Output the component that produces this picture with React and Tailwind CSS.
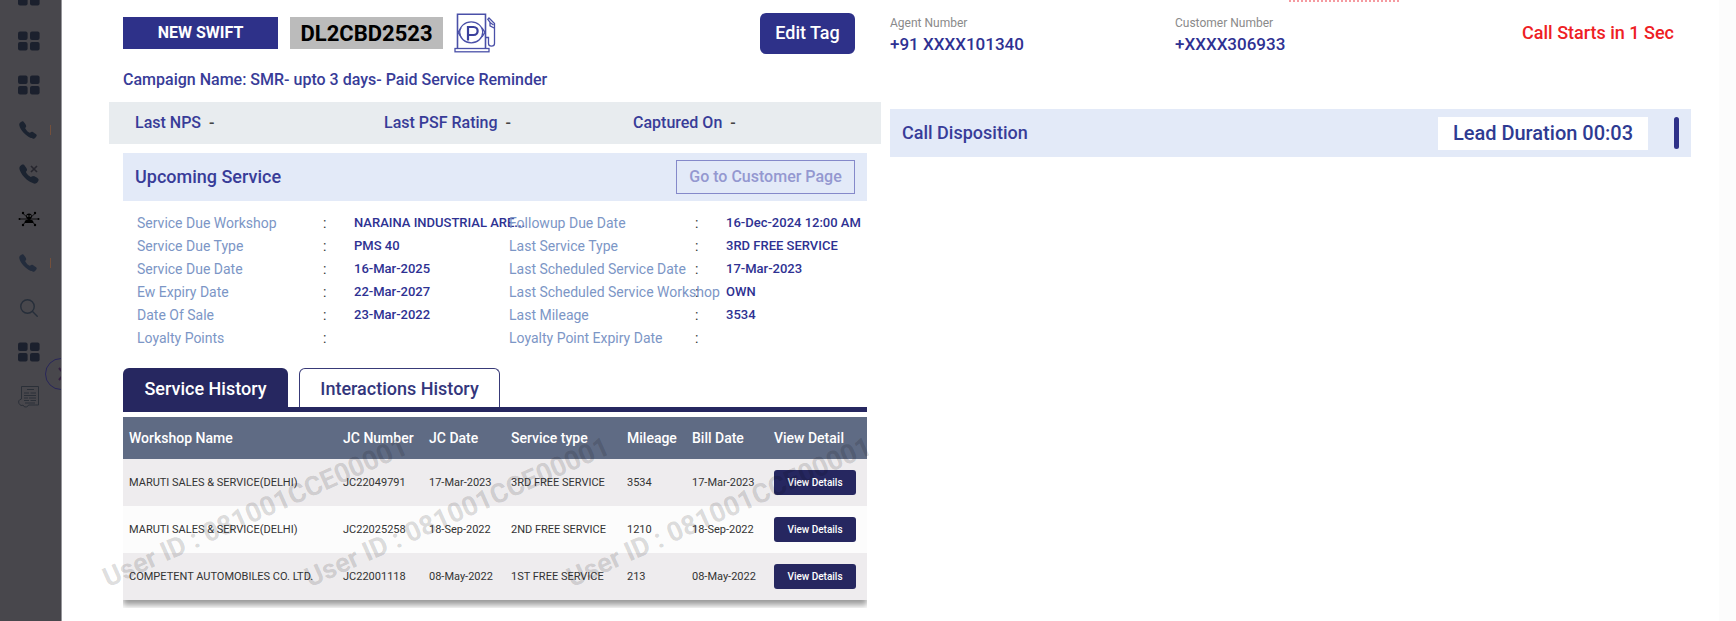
import { IoCall, IoSearchOutline } from "react-icons/io5";

function GridIcon() {
  return (
    <svg viewBox="0 0 22 20" className="h-5 w-[22px] fill-[#1b202d]">
      <rect x="0" y="0.5" width="9.6" height="8.6" rx="2" />
      <rect x="12" y="0.5" width="9.6" height="8.6" rx="2" />
      <rect x="0" y="11" width="9.6" height="8.6" rx="2" />
      <rect x="12" y="11" width="9.6" height="8.6" rx="2" />
    </svg>
  );
}

function CallIcon({ missed, light }) {
  return (
    <span className="relative flex h-[22px] w-[22px] items-center">
      <IoCall className={light ? "size-5 text-[#232c3c]" : missed ? "size-[22px] text-[#1b2330]" : "size-5 text-[#1b2330]"} />
      {missed && (
        <svg viewBox="0 0 8 8" className="absolute top-[2px] right-[2px] size-2 fill-none stroke-[#26262e] stroke-[1.6]">
          <path d="M1 1l6 6M7 1L1 7" />
        </svg>
      )}
    </span>
  );
}

function VirusIcon() {
  return (
    <svg viewBox="0 0 22 16" className="h-4 w-[22px] fill-black stroke-black">
      <path d="M4.500 2l13 12M17.500 2l-13 12M1 8h20" strokeWidth="0.8" />
      <circle cx="5" cy="2" r="1.2" stroke="none" />
      <circle cx="17" cy="2" r="1.2" stroke="none" />
      <circle cx="5" cy="14" r="1.2" stroke="none" />
      <circle cx="17" cy="14" r="1.2" stroke="none" />
      <circle cx="1.5" cy="8" r="1" stroke="none" />
      <circle cx="20.5" cy="8" r="1" stroke="none" />
      <circle cx="11" cy="5.4" r="2.800" stroke="none" />
      <path d="M6.5 12c0-2.800 1.5-3.500 4.500-3.500s4.500.7 4.500 3.500z" stroke="none" />
      <circle cx="9.800" cy="5" r="0.700" fill="#77777b" stroke="none" />
      <circle cx="12.200" cy="5" r="0.700" fill="#77777b" stroke="none" />
    </svg>
  );
}

function DocumentIcon() {
  return (
    <svg viewBox="0 0 22 24" className="h-6 w-[22px] fill-none stroke-[#2b3038]">
      <path d="M3.500 14V1.500h17v18.500h-3" strokeWidth="1" />
      <path d="M3.500 14c-2.500.5-3.500 2.500-2.500 4.500s3 2.500 4 1.500M5 20c.5 2 3 2.500 4.500 1.500l1-1.500h7" strokeWidth="1" />
      <path d="M9 4.500h7M6 8h5M12.500 8H18M6 10.500h12M6 13h4M11 13h7M6 15.500h5M12.500 15.500H18M7 18h10" strokeWidth="1.200" />
    </svg>
  );
}

function FuelPumpIcon() {
  return (
    <svg viewBox="0 0 42 40" className="h-10 w-[42px] fill-none stroke-[#4a50a8]" strokeWidth="1.300">
      <path d="M3.500 35V1.200h28V35" strokeWidth="1.600" />
      <rect x="1" y="35.500" width="34" height="3.300" />
      <ellipse cx="17.200" cy="19.300" rx="11.500" ry="10.500" />
      <path d="M4 19.300l3-4.500M4 19.300l3 4.500M31 19.300l-3-4.500M31 19.300l-3 4.500" />
      <path d="M14 27.500V14h5.500c5.500 0 5.500 8 0 8H14" strokeWidth="2.200" stroke="#3a409c" />
      <path d="M32 24.500h2.500v6c0 3.500 6 3.500 6 0V10.500L35 5l-1.200 1.300 2.200 3v3.500l4.500 2.500M36 9.500l3.500 2.500" />
    </svg>
  );
}

const menu = [
  { name: "Overview", icon: <GridIcon /> },
  { name: "Dashboard", icon: <GridIcon /> },
  { name: "Reports", icon: <GridIcon /> },
  { name: "Calls", icon: <CallIcon />, mark: true },
  { name: "Missed calls", icon: <CallIcon missed /> },
  { name: "Safety", icon: <VirusIcon /> },
  { name: "Call log", icon: <CallIcon light />, mark: true },
  { name: "Search", icon: <IoSearchOutline className="size-[22px] text-[#262e3a]" /> },
  { name: "Modules", icon: <GridIcon /> },
  { name: "Documents", icon: <DocumentIcon /> },
];

function Sidebar() {
  return (
    <aside className="relative w-[62px] shrink-0 overflow-hidden border-r border-[#96969a] bg-[#48474c]">
      <nav className="-mt-[15px] flex h-[423px] flex-col justify-between">
        {menu.map((item) => (
          <a key={item.name} href="#" aria-label={item.name} className="flex h-[22px] items-center pl-[18px]">
            {item.icon}
            {item.mark && <span className="ml-[10px] h-[10px] w-px bg-[#74503c]" />}
          </a>
        ))}
      </nav>
      <button aria-label="Expand menu" className="absolute top-[358px] left-[45px] size-8 rounded-full border border-[#28265a]">
        <svg viewBox="0 0 32 32" className="absolute -top-px -left-px size-8 fill-none stroke-[#33203f]" strokeWidth="2">
          <path d="M14 10l5 6-5 6" />
        </svg>
      </button>
    </aside>
  );
}

const dueDetails = [
  ["Service Due Workshop", "NARAINA INDUSTRIAL ARE..."],
  ["Service Due Type", "PMS 40"],
  ["Service Due Date", "16-Mar-2025"],
  ["Ew Expiry Date", "22-Mar-2027"],
  ["Date Of Sale", "23-Mar-2022"],
  ["Loyalty Points", ""],
];

const lastDetails = [
  ["Followup Due Date", "16-Dec-2024 12:00 AM"],
  ["Last Service Type", "3RD FREE SERVICE"],
  ["Last Scheduled Service Date", "17-Mar-2023"],
  ["Last Scheduled Service Workshop", "OWN"],
  ["Last Mileage", "3534"],
  ["Loyalty Point Expiry Date", ""],
];

function DetailList({ items }) {
  return (
    <dl>
      {items.map(([label, value]) => (
        <div key={label} className="grid h-[23px] grid-cols-[186px_31px_1fr] items-center whitespace-nowrap">
          <dt className="w-0 text-sm text-[#7c96c6]">{label}</dt>
          <span className="text-sm text-[#333]">:</span>
          <dd className="w-0 text-[13px] font-medium text-[#2e3192]">{value}</dd>
        </div>
      ))}
    </dl>
  );
}

const ratings = ["Last NPS", "Last PSF Rating", "Captured On"];

const history = [
  ["MARUTI SALES & SERVICE(DELHI)", "JC22049791", "17-Mar-2023", "3RD FREE SERVICE", "3534", "17-Mar-2023"],
  ["MARUTI SALES & SERVICE(DELHI)", "JC22025258", "18-Sep-2022", "2ND FREE SERVICE", "1210", "18-Sep-2022"],
  ["COMPETENT AUTOMOBILES CO. LTD.", "JC22001118", "08-May-2022", "1ST FREE SERVICE", "213", "08-May-2022"],
];

function HistoryTable() {
  return (
    <table className="w-full table-fixed text-left whitespace-nowrap shadow-[0_5px_6px_rgba(0,0,0,0.4)]">
      <colgroup>
        <col className="w-[214px]" />
        <col className="w-[86px]" />
        <col className="w-[82px]" />
        <col className="w-[116px]" />
        <col className="w-[65px]" />
        <col className="w-[82px]" />
        <col className="w-[99px]" />
      </colgroup>
      <thead className="bg-[#5f6b84] text-sm text-white">
        <tr className="h-[42px]">
          {["Workshop Name", "JC Number", "JC Date", "Service type", "Mileage", "Bill Date", "View Detail"].map((h) => (
            <th key={h} className="pl-1.5 font-medium">{h}</th>
          ))}
        </tr>
      </thead>
      <tbody className="text-[11px] text-[#333]">
        {history.map((row) => (
          <tr key={row[1]} className="h-[47px] odd:bg-[#eeecee] even:bg-[#fcfcfc]">
            {row.map((cell, i) => (
              <td key={i} className="pt-0.5 pl-1.5">{cell}</td>
            ))}
            <td className="pl-1.5">
              <button className="block h-[25px] w-[82px] rounded-[3px] bg-[#262760] text-[10px] font-medium text-white">
                View Details
              </button>
            </td>
          </tr>
        ))}
      </tbody>
    </table>
  );
}

function Watermark({ className }) {
  return (
    <span className={`pointer-events-none absolute origin-bottom-left rotate-[-24deg] text-[27px] leading-[27px] font-bold whitespace-nowrap text-black/15 ${className}`}>
      User ID : 081001CCE00001
    </span>
  );
}

function CustomerPanel() {
  return (
    <section className="pt-3">
      <div className="px-[14px]">
        <div className="flex h-[42px] items-center">
          <span className="flex h-8 w-[155px] items-center justify-center bg-[#2e3189] text-base font-bold text-white">NEW SWIFT</span>
          <span className="ml-3 flex h-8 w-[153px] items-center justify-center bg-[#bbb] text-[22px] font-bold text-black">DL2CBD2523</span>
          <span className="ml-[11px]">
            <FuelPumpIcon />
          </span>
          <button className="mr-3 ml-auto h-[41px] w-[95px] rounded-md bg-[#2e3189] text-lg font-medium text-white">Edit Tag</button>
        </div>
        <p className="mt-4 h-8 text-base leading-5 font-medium text-[#383c98]">
          Campaign Name: SMR- upto 3 days- Paid Service Reminder
        </p>
      </div>

      <div className="grid h-[42px] grid-cols-[249fr_249fr_248fr] items-center bg-[#e8ecef] pl-[26px] text-base font-medium text-[#383c98]">
        {ratings.map((label) => (
          <div key={label}>
            {label} <span className="ml-1 text-[#444]">-</span>
          </div>
        ))}
      </div>

      <div className="mx-[14px] mt-[9px] flex h-12 items-center justify-between bg-[#e3eaf8] pr-3 pl-3">
        <h2 className="text-lg font-medium text-[#383c98]">Upcoming Service</h2>
        <button className="h-[34px] w-[179px] border border-[#8589ca] text-base font-medium text-[#9498d0]">Go to Customer Page</button>
      </div>

      <div className="mt-[10px] grid grid-cols-2 pl-7">
        <DetailList items={dueDetails} />
        <DetailList items={lastDetails} />
      </div>

      <div className="relative mx-[14px] mt-[19px]">
        <div role="tablist" className="flex gap-[11px] border-b-[5px] border-[#262760]">
          <button role="tab" aria-selected="true" className="h-[39px] w-[165px] rounded-t-md bg-[#262760] pt-0.5 text-lg font-medium text-white">
            Service History
          </button>
          <button role="tab" aria-selected="false" className="h-[39px] w-[201px] rounded-t-md border border-b-0 border-[#383a78] pt-0.5 text-lg font-medium text-[#33367c]">
            Interactions History
          </button>
        </div>
        <div className="mt-[5px] overflow-hidden pb-2">
          <HistoryTable />
        </div>
        <Watermark className="bottom-[16px] left-[-13px]" />
        <Watermark className="bottom-[16px] left-[189px]" />
        <Watermark className="bottom-[16px] left-[451px]" />
      </div>
    </section>
  );
}

function CallPanel() {
  return (
    <section className="relative pt-[15px]">
      <div className="absolute top-0 left-[399px] h-0.5 w-[110px] border-t-2 border-dotted border-[#f59aa0]" />
      <div className="flex h-[94px] items-start pr-[17px]">
        <dl className="grid flex-1 grid-cols-2">
          <div>
            <dt className="text-xs leading-4 text-[#8a8a8a]">Agent Number</dt>
            <dd className="mt-[3px] text-[17px] leading-5 font-medium text-[#2e3192]">+91 XXXX101340</dd>
          </div>
          <div>
            <dt className="text-xs leading-4 text-[#8a8a8a]">Customer Number</dt>
            <dd className="mt-[3px] text-[17px] leading-5 font-medium text-[#2e3192]">+XXXX306933</dd>
          </div>
        </dl>
        <p className="mt-2 w-[214px] text-right text-lg leading-5 font-medium text-[#ee2024]">Call Starts in 1 Sec</p>
      </div>
      <div className="flex h-12 items-center bg-[#e3eaf8] pr-3 pl-3">
        <h2 className="text-lg font-medium text-[#383c98]">Call Disposition</h2>
        <span className="ml-auto flex h-[33px] w-[210px] items-center justify-center bg-white text-xl font-medium text-[#2e3b92]">
          Lead Duration 00:03
        </span>
        <span className="ml-[26px] h-8 w-[5px] rounded-sm bg-[#2e3189]" />
      </div>
    </section>
  );
}

export default function App() {
  return (
    <div className="flex min-h-screen bg-white font-['Roboto',sans-serif]">
      <Sidebar />
      <main className="grid flex-1 grid-cols-[772fr_801fr] items-start gap-[9px] border-r-[17px] border-[#fcfcfc] pr-7 pl-[47px]">
        <CustomerPanel />
        <CallPanel />
      </main>
    </div>
  );
}
